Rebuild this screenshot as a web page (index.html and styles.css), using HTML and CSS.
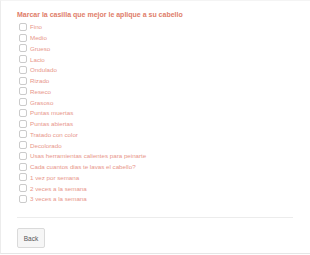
FILE: index.html
```html
<!DOCTYPE html>
<html lang="es">

<head>
    <meta charset="UTF-8">
    <meta name="viewport" content="width=device-width, initial-scale=1.0">
    <title>Cabello</title>
    <link rel="stylesheet" href="styles.css">
</head>

<body>
    <div class="panel">
        <form class="quiz">
            <div class="question">Marcar la casilla que mejor le aplique a su cabello</div>
            <label class="option"><input type="checkbox"><i class="box"></i><span>Fino</span></label>
            <label class="option"><input type="checkbox"><i class="box"></i><span>Medio</span></label>
            <label class="option"><input type="checkbox"><i class="box"></i><span>Grueso</span></label>
            <label class="option"><input type="checkbox"><i class="box"></i><span>Lacio</span></label>
            <label class="option"><input type="checkbox"><i class="box"></i><span>Ondulado</span></label>
            <label class="option"><input type="checkbox"><i class="box"></i><span>Rizado</span></label>
            <label class="option"><input type="checkbox"><i class="box"></i><span>Reseco</span></label>
            <label class="option"><input type="checkbox"><i class="box"></i><span>Grasoso</span></label>
            <label class="option"><input type="checkbox"><i class="box"></i><span>Puntas muertas</span></label>
            <label class="option"><input type="checkbox"><i class="box"></i><span>Puntas abiertas</span></label>
            <label class="option"><input type="checkbox"><i class="box"></i><span>Tratado con color</span></label>
            <label class="option"><input type="checkbox"><i class="box"></i><span>Decolorado</span></label>
            <label class="option"><input type="checkbox"><i class="box"></i><span>Usas herramientas calientes para peinarte</span></label>
            <label class="option"><input type="checkbox"><i class="box"></i><span>Cada cuantos dias te lavas el cabello?</span></label>
            <label class="option"><input type="checkbox"><i class="box"></i><span>1 vez por semana</span></label>
            <label class="option"><input type="checkbox"><i class="box"></i><span>2 veces a la semana</span></label>
            <label class="option"><input type="checkbox"><i class="box"></i><span>3 veces a la semana</span></label>
            <hr class="divider">
            <button type="button" class="back">Back</button>
        </form>
    </div>
</body>

</html>
```
FILE: styles.css
```css
* {
    box-sizing: border-box;
}

body {
    margin: 0;
    font-family: 'Liberation Sans', Arial, sans-serif;
    background: #fff;
}

.panel {
    width: 310px;
    height: 254px;
    border-left: 1px solid #ececec;
    border-bottom: 1px solid #e6e6e6;
    border-top: 1px solid #f4f4f4;
}

.quiz {
    display: flex;
    flex-direction: column;
    padding: 9px 17px 0 16px;
}

.question {
    font-size: 7px;
    font-weight: bold;
    color: #e07d69;
    line-height: 9px;
    margin-bottom: 2.5px;
}

.option {
    display: flex;
    align-items: center;
    height: 10.75px;
    padding-left: 2px;
    font-size: 6.2px;
    color: #e8968a;
}

.option input {
    display: none;
}

.box {
    flex: none;
    width: 8px;
    height: 8px;
    margin-right: 3px;
    border: 1px solid #cbcbcb;
    border-radius: 2px;
    background: #fff;
}

.divider {
    width: 100%;
    margin: 13px 0 10px;
    border: 0;
    border-top: 1px solid #ececec;
}

.back {
    align-self: flex-start;
    width: 28px;
    height: 20px;
    padding: 0;
    font-family: inherit;
    font-size: 6.5px;
    color: #555;
    background: #f6f6f6;
    border: 1px solid #dadada;
    border-radius: 2px;
}
```
